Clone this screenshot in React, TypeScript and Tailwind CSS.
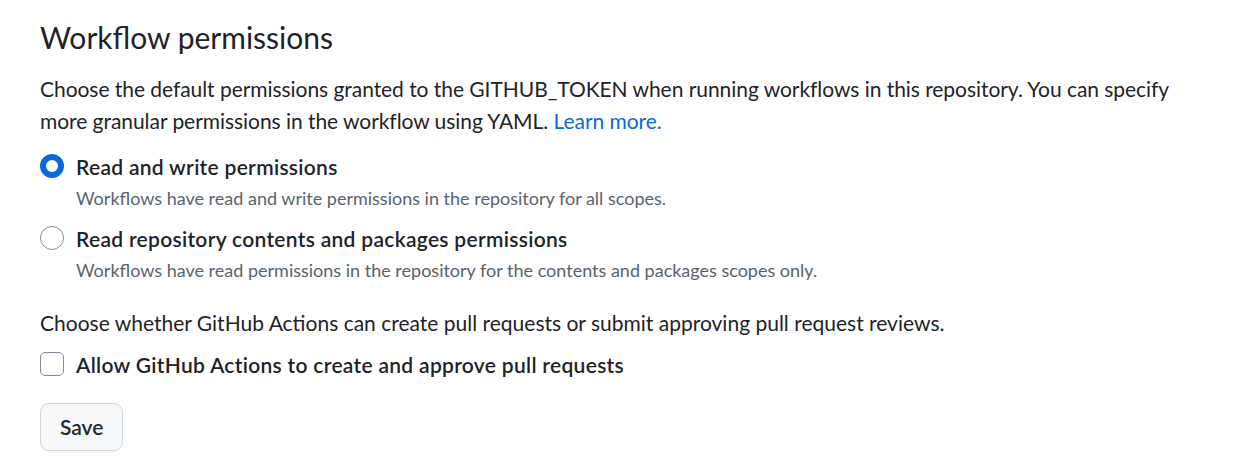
function Radio({ checked }: { checked?: boolean }) {
  return checked ? (
    <span className="mt-[3px] box-border h-[24px] w-[24px] shrink-0 rounded-full border-[6px] border-[#0969da] bg-white" />
  ) : (
    <span className="mt-[3px] box-border h-[24px] w-[24px] shrink-0 rounded-full border-[1.5px] border-[#818b98] bg-white" />
  );
}

const options = [
  {
    label: 'Read and write permissions',
    hint: 'Workflows have read and write permissions in the repository for all scopes.',
    checked: true,
  },
  {
    label: 'Read repository contents and packages permissions',
    hint: 'Workflows have read permissions in the repository for the contents and packages scopes only.',
    checked: false,
  },
];

export default function App() {
  return (
    <div className="min-h-screen bg-white px-[40px] pt-[15px] text-[#1f2328] [font-family:Lato,sans-serif]">
      <h2 className="text-[30px] leading-[45px] font-normal">Workflow permissions</h2>
      <p className="mt-[13px] w-[1140px] text-[21px] leading-[32px] tracking-[-0.05px]">
        Choose the default permissions granted to the GITHUB_TOKEN when running workflows in this repository. You can specify more granular permissions in the workflow using YAML.{' '}
        <a href="#" className="text-[#0969da]">Learn more.</a>
      </p>

      <div className="mt-[14px] flex flex-col gap-[11px]">
        {options.map((o) => (
          <div key={o.label} className="flex gap-[12px]">
            <Radio checked={o.checked} />
            <div>
              <div className="text-[21px] leading-[32px] font-semibold tracking-[0.3px]">{o.label}</div>
              <div className="mt-[2px] text-[18px] leading-[27px] text-[#59636e]">{o.hint}</div>
            </div>
          </div>
        ))}
      </div>

      <p className="mt-[23px] text-[21px] leading-[32px]">
        Choose whether GitHub Actions can create pull requests or submit approving pull request reviews.
      </p>
      <label className="mt-[10px] flex gap-[12px]">
        <span className="mt-[3px] box-border h-[24px] w-[24px] shrink-0 rounded-[5px] border-[1.5px] border-[#818b98] bg-white" />
        <span className="text-[21px] leading-[32px] font-semibold tracking-[0.3px]">Allow GitHub Actions to create and approve pull requests</span>
      </label>

      <button className="mt-[22px] block h-[48px] rounded-[9px] border border-[#d1d9e0] bg-[#f6f8fa] px-[19px] text-[21px] font-semibold text-[#25292e] shadow-[0_1.5px_0_rgba(31,35,40,0.04)]">
        Save
      </button>
    </div>
  );
}
